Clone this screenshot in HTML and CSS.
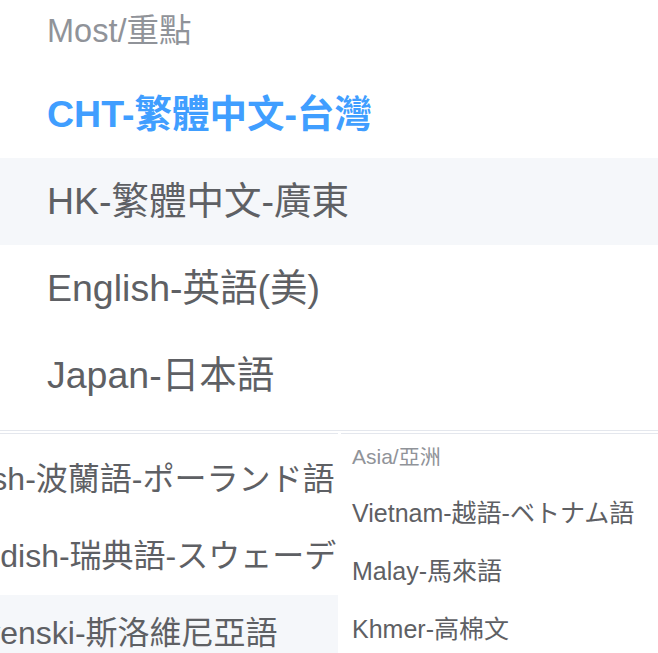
FILE: index.html
```html
<!DOCTYPE html>
<html lang="zh-Hant">
<head>
  <meta charset="UTF-8" />
  <meta name="viewport" content="width=device-width, initial-scale=1.0"/>
  <title>語言選擇</title>
  <link rel="stylesheet" href="styles.css">
</head>
<body>

<div class="top-menu">
  <div class="group-title">Most/重點</div>
  <div class="option selected">CHT-繁體中文-台灣</div>
  <div class="option hover">HK-繁體中文-廣東</div>
  <div class="option">English-英語(美)</div>
  <div class="option">Japan-日本語</div>
</div>

<div class="bottom">
  <div class="col col-left">
    <div class="left-list">
      <div class="option-md">Polish-波蘭語-ポーランド語</div>
      <div class="option-md">Swedish-瑞典語-スウェーデン語</div>
      <div class="option-md hover">Slovenski-斯洛維尼亞語</div>
    </div>
  </div>
  <div class="col col-right">
    <div class="group-title-sm">Asia/亞洲</div>
    <div class="option-sm">Vietnam-越語-ベトナム語</div>
    <div class="option-sm">Malay-馬來語</div>
    <div class="option-sm">Khmer-高棉文</div>
  </div>
</div>

</body>
</html>
```

FILE: styles.css
```css
:root {
  --title: #909399;
  --text: #5e6064;
  --primary: #409eff;
  --hover: #f5f7fa;
  --line: #e4e7ed;
}

body {
  margin: 0;
  width: 658px;
  height: 653px;
  overflow: hidden;
  background: #ffffff;
  font-family: "Liberation Sans", "Noto Sans CJK TC", sans-serif;
  color: var(--text);
}

.top-menu {
  padding-bottom: 11px;
  border-bottom: 1px solid var(--line);
}

.group-title {
  padding-left: 47px;
  height: 71px;
  line-height: 62px;
  font-size: 32.5px;
  color: var(--title);
}

.option {
  padding-left: 47px;
  height: 87px;
  line-height: 87px;
  font-size: 37.5px;
  white-space: nowrap;
}

.option.selected {
  color: var(--primary);
  font-weight: bold;
}

.hover {
  background: var(--hover);
}

.bottom {
  display: flex;
  gap: 3px;
  padding-top: 2px;
}

.col {
  border-top: 1px solid var(--line);
  height: 220px;
  overflow: hidden;
}

.col-left {
  width: 338px;
  flex: none;
  padding-top: 7px;
}

.left-list {
  margin-left: -62px;
}

.option-md {
  height: 77px;
  line-height: 77px;
  font-size: 32px;
  white-space: nowrap;
}

.col-right {
  flex: 1;
  padding-left: 11px;
}

.group-title-sm {
  height: 50px;
  line-height: 46px;
  font-size: 21px;
  color: var(--title);
}

.option-sm {
  height: 58px;
  line-height: 58px;
  font-size: 25px;
  white-space: nowrap;
}
```
